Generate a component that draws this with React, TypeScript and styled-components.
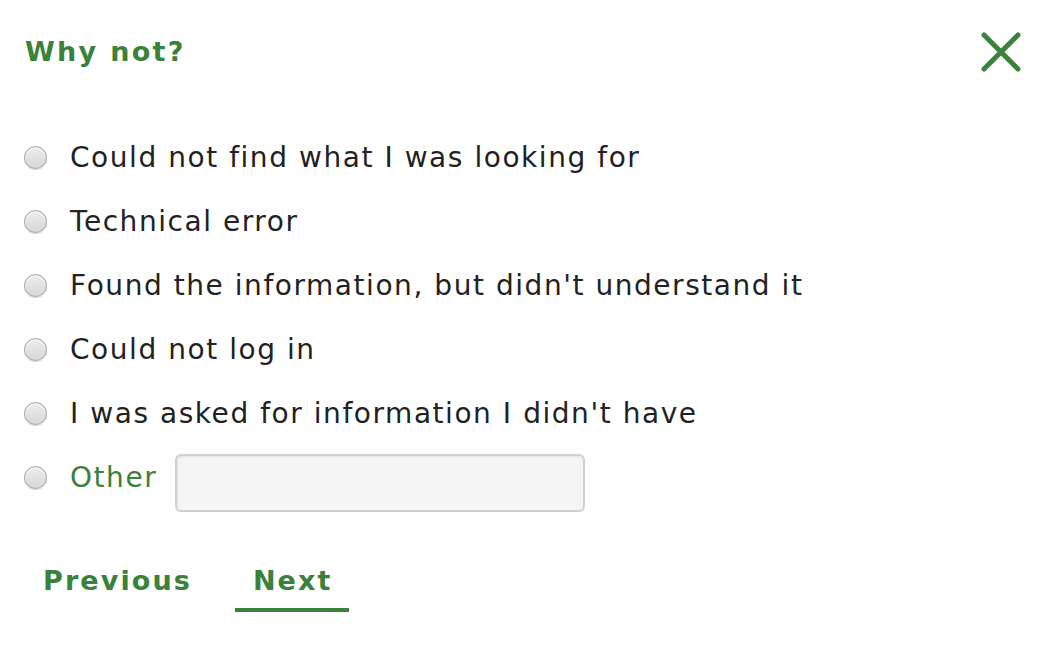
import styled, { createGlobalStyle } from "styled-components";

const GlobalStyle = createGlobalStyle`
    html, body {
        margin: 0;
        padding: 0;
        background: #ffffff;
    }
    body {
        font-family: "DejaVu Sans", Verdana, sans-serif;
    }
`;

const GREEN = "#3a8139";

// Whole survey panel
const Panel = styled.div`
    width: 1044px;
    height: 658px;
    box-sizing: border-box;
    padding: 0 22px 0 25px;
    display: flex;
    flex-direction: column;
`;

// Title row with close button
const Header = styled.div`
    height: 102px;
    display: flex;
    align-items: center;
    justify-content: space-between;
`;

const Title = styled.h2`
    margin: 0;
    font-size: 27px;
    font-weight: bold;
    letter-spacing: 2.3px;
    color: ${GREEN};
`;

const CloseButton = styled.button`
    border: none;
    background: none;
    padding: 0;
    width: 42px;
    height: 42px;
    margin-top: 2px;
    display: flex;
    align-items: center;
    justify-content: center;
    cursor: pointer;
`;

// List of reasons
const Options = styled.div`
    padding-top: 23px;
    display: flex;
    flex-direction: column;
`;

const OptionRow = styled.label`
    height: 64px;
    display: flex;
    align-items: center;
    cursor: pointer;
`;

// Custom grey radio circle
const Radio = styled.span`
    width: 21px;
    height: 21px;
    border-radius: 50%;
    border: 1px solid #9c9c9c;
    background: linear-gradient(#ececec, #d8d8d8);
    box-shadow: inset 0 1px 2px rgba(255, 255, 255, 0.9), 0 1px 1px rgba(0, 0, 0, 0.15);
    flex-shrink: 0;
    margin-left: -1px;
    margin-right: 23px;
`;

const OptionText = styled.span<{ $accent?: boolean }>`
    font-size: 28px;
    letter-spacing: 1.55px;
    color: ${(p) => (p.$accent ? GREEN : "#222222")};
`;

const OtherInput = styled.input`
    margin-left: 18px;
    width: 410px;
    height: 58px;
    box-sizing: border-box;
    border: 2px solid #d0d0d0;
    border-radius: 6px;
    background: #f5f5f5;
    box-shadow: inset 1px 1px 2px rgba(0, 0, 0, 0.08);
    font-size: 26px;
    padding: 0 12px;
    margin-top: 12px;
`;

// Previous / Next navigation
const Footer = styled.div`
    margin-top: 56px;
    display: flex;
    gap: 27px;
`;

const NavButton = styled.button<{ $active?: boolean }>`
    border: none;
    background: none;
    font-family: "DejaVu Sans", Verdana, sans-serif;
    font-size: 27px;
    font-weight: bold;
    letter-spacing: 2.1px;
    color: ${GREEN};
    padding: 0 16px 12px 18px;
    line-height: 31px;
    border-bottom: 4px solid ${(p) => (p.$active ? GREEN : "transparent")};
    cursor: pointer;
`;

const reasons = [
    "Could not find what I was looking for",
    "Technical error",
    "Found the information, but didn't understand it",
    "Could not log in",
    "I was asked for information I didn't have",
];

export default function App() {
    return (
        <>
            <GlobalStyle />
            <Panel>
                <Header>
                    <Title>Why not?</Title>
                    <CloseButton aria-label="Close">
                        <svg width="40" height="40" viewBox="0 0 40 40">
                            <path d="M3 3 L37 37 M37 3 L3 37" stroke={GREEN} strokeWidth="5" strokeLinecap="round" />
                        </svg>
                    </CloseButton>
                </Header>

                <Options>
                    {reasons.map((r) => (
                        <OptionRow key={r}>
                            <Radio />
                            <OptionText>{r}</OptionText>
                        </OptionRow>
                    ))}
                    <OptionRow>
                        <Radio />
                        <OptionText $accent>Other</OptionText>
                        <OtherInput type="text" />
                    </OptionRow>
                </Options>

                <Footer>
                    <NavButton>Previous</NavButton>
                    <NavButton $active>Next</NavButton>
                </Footer>
            </Panel>
        </>
    );
}
